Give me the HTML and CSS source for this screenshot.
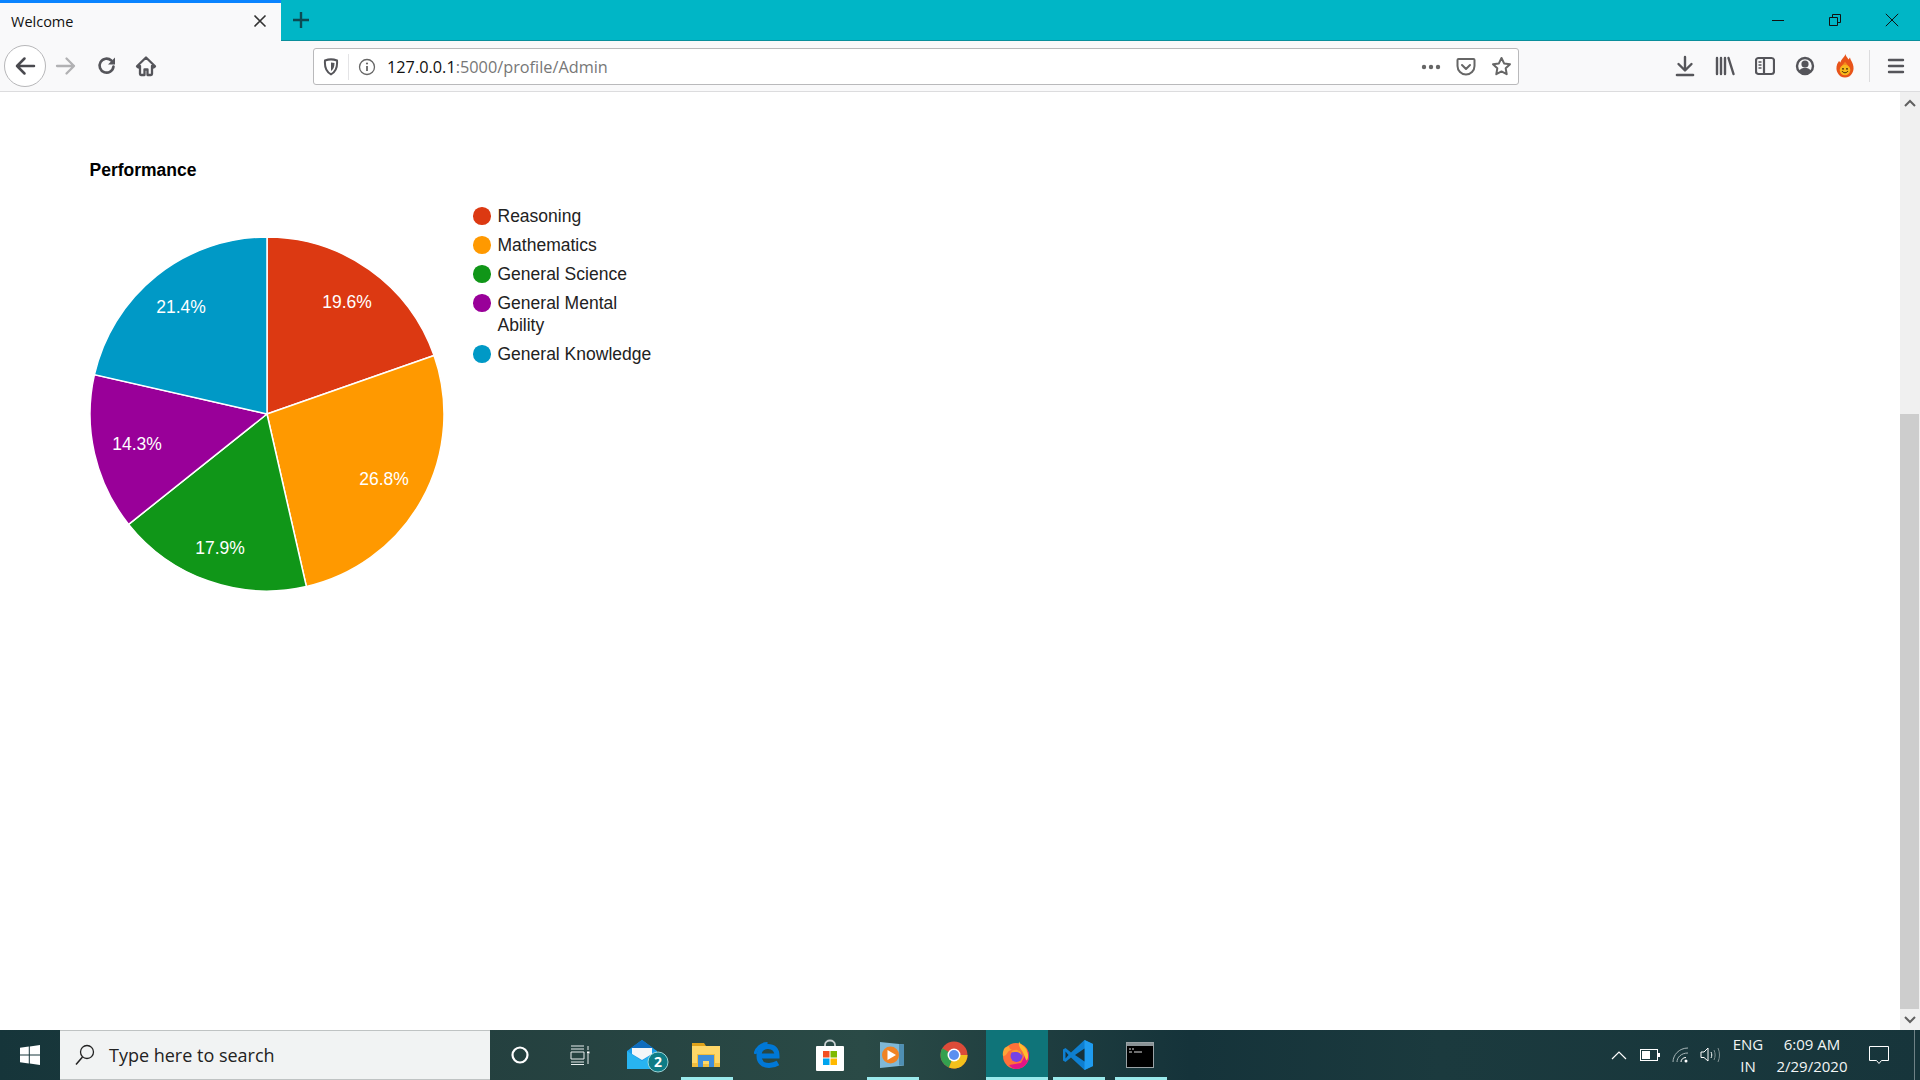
FILE: index.html
```html
<!DOCTYPE html>
<html lang="en">
<head>
<meta charset="utf-8">
<title>Welcome</title>
<link rel="stylesheet" href="styles.css">
</head>
<body>
<div class="window">
  <header class="titlebar">
    <div class="tab">
      <span class="tab-title">Welcome</span>
      <svg class="tab-close" width="14" height="14" viewBox="0 0 14 14"><path d="M1.5 1.5l11 11M12.5 1.5l-11 11" stroke="#333" stroke-width="1.6" fill="none"/></svg>
    </div>
    <div class="new-tab">
      <svg width="18" height="18" viewBox="0 0 18 18"><path d="M9 1v16M1 9h16" stroke="#0b4a52" stroke-width="2.4" fill="none"/></svg>
    </div>
    <div class="caption">
      <div class="caption-btn"><svg width="14" height="14" viewBox="0 0 14 14"><path d="M1 7.5h12" stroke="#111" stroke-width="1" fill="none"/></svg></div>
      <div class="caption-btn"><svg width="14" height="14" viewBox="0 0 14 14"><path d="M1.5 4.5h8v8h-8zM4.5 4.5v-3h8v8h-3" stroke="#111" stroke-width="1" fill="none"/></svg></div>
      <div class="caption-btn"><svg width="14" height="14" viewBox="0 0 14 14"><path d="M.8.8l12.4 12.4M13.2.8L.8 13.2" stroke="#111" stroke-width="1" fill="none"/></svg></div>
    </div>
  </header>

  <nav class="toolbar">
    <div class="back-btn">
      <svg width="22" height="22" viewBox="0 0 22 22"><path d="M20 11H3M10.500 3.500L3 11l7.500 7.500" stroke="#4a4a4f" stroke-width="2.500" fill="none" stroke-linecap="round" stroke-linejoin="round"/></svg>
    </div>
    <div class="tool"><svg width="22" height="22" viewBox="0 0 22 22"><path d="M2 11h17M11.500 3.500L19 11l-7.500 7.500" stroke="#b1b1b3" stroke-width="2.300" fill="none" stroke-linecap="round" stroke-linejoin="round"/></svg></div>
    <div class="tool tool-reload"><svg width="20" height="20" viewBox="0 0 20 20"><path d="M16.500 10.500a7 7 0 1 1-2.200-6" stroke="#55555a" stroke-width="2.600" fill="none" stroke-linecap="round"/><path d="M18 1.500v7h-7z" fill="#55555a"/></svg></div>
    <div class="tool"><svg width="22" height="22" viewBox="0 0 22 22"><path d="M11 2.500L2 11.300l1.300 1.200L5 11v8c0 .6.400 1 1 1h3.500v-5.500h3V20H16c.6 0 1-.4 1-1v-8l1.700 1.500 1.300-1.200z" fill="none" stroke="#55555a" stroke-width="2.300" stroke-linejoin="round"/></svg></div>

    <div class="urlbar">
      <div class="url-shield">
        <svg width="16" height="18" viewBox="0 0 16 18"><path d="M2 2.500c4-1.500 8-1.500 12 0 .5 6-1 11.500-6 13.800C3 14 1.500 8.500 2 2.500z" fill="none" stroke="#55555a" stroke-width="2"/><path d="M8 4.500c1.300 0 2.500.2 3.500.6 0 3.500-1 6.500-3.500 8z" fill="#55555a"/></svg>
      </div>
      <div class="url-info">
        <svg width="18" height="18" viewBox="0 0 18 18"><circle cx="9" cy="9" r="7.500" fill="none" stroke="#666" stroke-width="1.300"/><path d="M9 8v5" stroke="#666" stroke-width="1.800"/><circle cx="9" cy="5.500" r="1.100" fill="#666"/></svg>
      </div>
      <span class="url-text"><span class="url-host">127.0.0.1</span>:5000/profile/Admin</span>
      <div class="url-actions">
        <svg width="20" height="6" viewBox="0 0 20 6"><circle cx="3" cy="3" r="2.200" fill="#666"/><circle cx="10" cy="3" r="2.200" fill="#666"/><circle cx="17" cy="3" r="2.200" fill="#666"/></svg>
        <svg width="20" height="20" viewBox="0 0 20 20"><path d="M2.500 2h15c.6 0 1 .4 1 1v6c0 4.700-3.800 8.500-8.500 8.500S1.500 13.700 1.500 9V3c0-.6.400-1 1-1z" fill="none" stroke="#666" stroke-width="2"/><path d="M6 8l4 4 4-4" fill="none" stroke="#666" stroke-width="2" stroke-linecap="round" stroke-linejoin="round"/></svg>
        <svg width="21" height="21" viewBox="0 0 21 21"><path d="M10.500 2l2.600 5.400 5.900.8-4.300 4.100 1 5.900-5.200-2.800-5.200 2.800 1-5.900L2 8.200l5.900-.8z" fill="none" stroke="#666" stroke-width="2" stroke-linejoin="round"/></svg>
      </div>
    </div>

    <div class="tool-group">
      <div class="tool"><svg width="20" height="22" viewBox="0 0 20 22"><path d="M10 2v13M3.500 9l6.500 6.500L16.500 9" fill="none" stroke="#55555a" stroke-width="2.400" stroke-linecap="round" stroke-linejoin="round"/><path d="M2 20h16" stroke="#55555a" stroke-width="2.600" stroke-linecap="round"/></svg></div>
      <div class="tool"><svg width="20" height="20" viewBox="0 0 20 20"><path d="M2 2v16M6 2v16M10 2v16M13.500 2l5 16" stroke="#55555a" stroke-width="2.400" fill="none" stroke-linecap="round"/></svg></div>
      <div class="tool"><svg width="20" height="20" viewBox="0 0 20 20"><rect x="1" y="2" width="18" height="16" rx="2.500" fill="none" stroke="#55555a" stroke-width="2.200"/><path d="M9 2v16" stroke="#55555a" stroke-width="2.200"/><path d="M3.500 6h3M3.500 9h3M3.500 12h3" stroke="#55555a" stroke-width="1.300"/></svg></div>
      <div class="tool"><svg width="20" height="20" viewBox="0 0 20 20"><circle cx="10" cy="10" r="8" fill="none" stroke="#55555a" stroke-width="2.400"/><circle cx="10" cy="8" r="3.600" fill="#55555a"/><path d="M4 15c1.500-2.500 3.500-3.200 6-3.200s4.500.7 6 3.200l-2 2H6z" fill="#55555a"/></svg></div>
      <div class="tool"><svg width="18" height="24" viewBox="0 0 18 24"><path d="M9.500 0c.3 2.500 2.200 3.500 3 5.500L14 3.500c.3 2 1.800 3.500 2.800 6.500 1.200 3.500 1 6.500-.5 9-1.500 3-4.300 4.500-7.300 4.500s-5.800-1.500-7.300-4.500c-1.500-2.500-1.700-5.500-.5-9L3 7l1.500 1.500C5 5 8.500 3.500 9.500 0z" fill="#e8541a"/><path d="M9 7.500c.5 1.500 2.500 2.500 3 4.500H6c.5-2 2.500-2.500 3-4.500z" fill="#f58a1f"/><circle cx="9" cy="16" r="5.300" fill="#f8b81e"/><circle cx="7" cy="14.800" r=".9" fill="#3a2606"/><circle cx="11" cy="14.800" r=".9" fill="#3a2606"/><path d="M6 17c1.400 2.300 4.600 2.300 6 0" fill="none" stroke="#3a2606" stroke-width="1"/></svg></div>
      <div class="tool-sep"></div>
      <div class="tool tool-menu"><svg width="18" height="16" viewBox="0 0 18 16"><path d="M2 2h14M2 8h14M2 14h14" stroke="#55555a" stroke-width="2.400" stroke-linecap="round"/></svg></div>
    </div>
  </nav>

  <div class="viewport">
    <main class="page">
      <h2 class="chart-title">Performance</h2>
      <div class="chart">
        <svg class="pie" width="356" height="356" viewBox="-178 -178 356 356">
          <g stroke="#fff" stroke-width="1.500">
            <path d="M0 0V-177A177 177 0 0 1 167.070 -58.460Z" fill="#dc3912"/>
            <path d="M0 0L167.070 -58.460A177 177 0 0 1 39.380 172.560Z" fill="#ff9900"/>
            <path d="M0 0L39.380 172.560A177 177 0 0 1 -138.380 110.360Z" fill="#109618"/>
            <path d="M0 0L-138.380 110.360A177 177 0 0 1 -172.560 -39.380Z" fill="#990099"/>
            <path d="M0 0L-172.560 -39.380A177 177 0 0 1 0 -177Z" fill="#0099c6"/>
          </g>
          <g class="pie-labels">
            <text x="80" y="-106">19.6%</text>
            <text x="117" y="71">26.8%</text>
            <text x="-47" y="140">17.9%</text>
            <text x="-130" y="36">14.3%</text>
            <text x="-86" y="-101">21.4%</text>
          </g>
        </svg>
        <ul class="legend">
          <li class="legend-item"><span class="dot dot-red"></span><span>Reasoning</span></li>
          <li class="legend-item"><span class="dot dot-orange"></span><span>Mathematics</span></li>
          <li class="legend-item"><span class="dot dot-green"></span><span>General Science</span></li>
          <li class="legend-item"><span class="dot dot-purple"></span><span>General Mental<br>Ability</span></li>
          <li class="legend-item"><span class="dot dot-blue"></span><span>General Knowledge</span></li>
        </ul>
      </div>
    </main>
    <aside class="scrollbar">
      <div class="scroll-btn"><svg width="12" height="8" viewBox="0 0 12 8"><path d="M1 7l5-5 5 5" fill="none" stroke="#606060" stroke-width="2"/></svg></div>
      <div class="scroll-track"><div class="scroll-thumb"></div></div>
      <div class="scroll-btn"><svg width="12" height="8" viewBox="0 0 12 8"><path d="M1 1l5 5 5-5" fill="none" stroke="#606060" stroke-width="2"/></svg></div>
    </aside>
  </div>

  <footer class="taskbar">
    <div class="start">
      <svg width="20" height="20" viewBox="0 0 20 20"><path d="M0 2.800l8.800-1.200v8H0zM9.800 1.400L20 0v9.600H9.800zM0 10.600h8.800v8L0 17.300zM9.800 10.600H20V20l-10.200-1.400z" fill="#fff"/></svg>
    </div>
    <div class="search">
      <svg width="20" height="22" viewBox="0 0 20 22"><circle cx="12" cy="8" r="6.500" fill="none" stroke="#222" stroke-width="1.300"/><path d="M7.500 13L1 20.500" stroke="#222" stroke-width="1.500"/></svg>
      <span class="search-text">Type here to search</span>
    </div>
    <div class="task-cell"><svg width="20" height="20" viewBox="0 0 20 20"><circle cx="10" cy="10" r="7.500" fill="none" stroke="#fff" stroke-width="2.200"/></svg></div>
    <div class="task-cell task-view"><svg width="20" height="20" viewBox="0 0 20 20"><path d="M1 1h13M1 4h13M1 7h13v7H1zM1 17h13M1 19.500h13M18 1v4M18 9v10" stroke="#e8eeee" stroke-width="1" fill="none"/><rect x="17" y="6.500" width="2.500" height="2" fill="#fff"/></svg></div>
    <div class="task-cell task-mail">
      <svg width="44" height="36" viewBox="0 0 44 36"><path d="M2 14L17 3l15 11v18H2z" fill="#1a9be8"/><path d="M17 3L6 11h22z" fill="#0f6cbd"/><path d="M7 11h20v6l-10 6-10-6z" fill="#f4f6f8"/><path d="M2 14l15 10 15-10v18H2z" fill="#28b4f0"/><circle cx="33" cy="25" r="10" fill="#0e7c86" stroke="#9cd5d8" stroke-width="1"/><text class="mail-count" x="33" y="30">2</text></svg>
    </div>
    <div class="task-cell is-open">
      <svg width="30" height="28" viewBox="0 0 30 28"><path d="M1 2h12l2 3H1z" fill="#dfa21a"/><path d="M1 5h28v21H1z" fill="#ffd768"/><path d="M1 22h5v-9h18v9h5v4H1z" fill="#f2bd3d"/><path d="M7 26V14h16v12h-5v-6h-6v6z" fill="#3f8edb"/><path d="M12 20h6v3h-6z" fill="#ffd768"/></svg>
    </div>
    <div class="task-cell">
      <svg width="28" height="28" viewBox="0 0 28 28"><path d="M5 15H23C23 8 19 5.500 14 5.500C8.500 5.500 5 9 5 15C5 21 9 24.500 15 24.500C18.500 24.500 21.500 23.500 24 22" fill="none" stroke="#0078d7" stroke-width="5"/><path d="M1 13C2.500 7 7 2.500 13.500 2.500" fill="none" stroke="#0078d7" stroke-width="3"/></svg>
    </div>
    <div class="task-cell">
      <svg width="28" height="32" viewBox="0 0 28 32"><path d="M9 8V6c0-6 10-6 10 0v2" fill="none" stroke="#c9d0d2" stroke-width="1.800"/><rect x="0" y="7" width="28" height="25" rx="1" fill="#fff"/><rect x="7" y="12" width="6.500" height="6.500" fill="#f25022"/><rect x="14.500" y="12" width="6.500" height="6.500" fill="#7fba00"/><rect x="7" y="19.500" width="6.500" height="6.500" fill="#00a4ef"/><rect x="14.500" y="19.500" width="6.500" height="6.500" fill="#ffb900"/></svg>
    </div>
    <div class="task-cell is-open">
      <svg width="26" height="28" viewBox="0 0 26 28"><path d="M1 1l24 2.500v21L1 27z" fill="#7fb8d6"/><path d="M20 3v21.500l5-.5V3.500z" fill="#4f8fb3"/><circle cx="11.500" cy="14" r="8.500" fill="#f08324"/><path d="M8.500 9l8.500 5-8.500 5z" fill="#fff"/></svg>
    </div>
    <div class="task-cell">
      <svg width="28" height="28" viewBox="0 0 28 28"><circle cx="14" cy="14" r="13.500" fill="#dd4b39"/><path d="M14 14L2.300 7.200A13.500 13.500 0 0 0 9 26.500z" fill="#34a04f"/><path d="M14 14h13.500A13.500 13.500 0 0 1 9 26.500z" fill="#f3c11c"/><circle cx="14" cy="14" r="6.500" fill="#fff"/><circle cx="14" cy="14" r="5" fill="#5a8ff0"/></svg>
    </div>
    <div class="task-cell is-active">
      <svg width="28" height="28" viewBox="0 0 28 28"><circle cx="14" cy="15" r="13" fill="#ff7139"/><path d="M14 28a13 13 0 0 0 13-13c0-2-.5-4-1.300-5.700L19 22l-12 2c2 2.500 4.500 4 7 4z" fill="#e31587"/><path d="M17 .5c1 3 5 4 7 7.500 2.500 4 3 8 1 11.500-1 .5-2-4-4-8-1.500-3-5-6-4-11z" fill="#ffbd2e"/><path d="M2 8c-1 2-1.500 5-1 7 2 0 3-1 5-4 1-1.500 3-2 4-2-2-1-3-2-3-4-2 .5-4 1-5 3z" fill="#ffa436"/><circle cx="14.500" cy="15" r="6" fill="#7542e5"/><path d="M9 11c2-2 5-3 8-1.500 2 1 3 3 2.500 5-1-2-3-3.500-5-3.500s-3 .5-5.500 0z" fill="#ff9a2b"/></svg>
    </div>
    <div class="task-cell is-open">
      <svg width="32" height="32" viewBox="0 0 32 32"><path d="M22.500 1L31 5v22l-8.500 4L9 18.500 3.500 23 1 21.500v-11L3.500 9 9 13.500z" fill="#0e7fd0"/><path d="M22.500 1L31 5v22l-8.500 4z" fill="#1f9cf0"/><path d="M22.500 9.500L13 16l9.500 6.500z" fill="#17323a"/><path d="M3.500 12.500L6.500 16l-3 3.500z" fill="#17323a"/></svg>
    </div>
    <div class="task-cell is-open">
      <svg width="28" height="26" viewBox="0 0 28 26"><rect x=".5" y=".5" width="27" height="25" fill="#000" stroke="#9aa3a6"/><rect x="1" y="1" width="26" height="3" fill="#8a9396"/><path d="M3 7h2M6 7h2M3 10h3M8 10h8" stroke="#ddd" stroke-width="1"/></svg>
    </div>
    <div class="tray">
      <svg class="tray-chevron" width="16" height="10" viewBox="0 0 16 10"><path d="M1 9l7-7 7 7" fill="none" stroke="#fff" stroke-width="1.200"/></svg>
      <svg class="tray-battery" width="20" height="12" viewBox="0 0 20 12"><rect x=".5" y=".5" width="17" height="11" fill="none" stroke="#fff"/><rect x="2" y="2" width="8" height="8" fill="#fff"/><rect x="18" y="4" width="2" height="4" fill="#fff"/></svg>
      <svg class="tray-wifi" width="18" height="16" viewBox="0 0 18 16"><path d="M1 15C1 8 7 1 16 1M5 15c0-4.500 4-9 11-9" fill="none" stroke="#a9b7b9" stroke-width="1"/><path d="M9 15c0-2.500 2-4.500 5-4.500" fill="none" stroke="#fff" stroke-width="1"/><circle cx="14" cy="14" r="1.500" fill="#fff"/></svg>
      <svg class="tray-volume" width="22" height="18" viewBox="0 0 22 18"><path d="M1 6h3l4-4v13l-4-3.500H1z" fill="none" stroke="#fff" stroke-width="1"/><path d="M11 6c1 2 1 4 0 6" fill="none" stroke="#fff"/><path d="M14 4c1.500 3.500 1.500 6.500 0 10M18 2c2 4.500 2 9.500 0 14" fill="none" stroke="#7f8f91"/></svg>
      <div class="tray-lang"><span>ENG</span><span>IN</span></div>
      <div class="tray-clock"><span>6:09 AM</span><span>2/29/2020</span></div>
      <svg class="tray-notify" width="20" height="20" viewBox="0 0 20 20"><path d="M.5 1.500h19v14h-7l-2.500 3-2.500-3h-7z" fill="none" stroke="#fff" stroke-width="1"/></svg>
      <div class="tray-edge"></div>
    </div>
  </footer>
</div>
</body>
</html>
```

FILE: styles.css
```css
* { box-sizing: border-box; }
html, body { margin: 0; padding: 0; height: 100%; overflow: hidden; background: #fff; }
.window { display: flex; flex-direction: column; width: 1920px; height: 1080px; font-family: "Liberation Sans", Arial, sans-serif; }

/* Title bar */
.titlebar { display: flex; align-items: stretch; height: 41px; flex: none; background: #00b6c6; border-bottom: 1px solid #0a8f9b; }
.tab { display: flex; align-items: center; justify-content: space-between; width: 281px; height: 41px; padding: 0 14px 2px 11px; background: #f9f9fa; border-top: 3px solid #0a84ff; }
.tab-title { font: 14.500px "Open Sans", "Noto Sans", sans-serif; color: #111; }
.new-tab { display: flex; align-items: center; padding-left: 11px; }
.caption { display: flex; margin-left: auto; }
.caption-btn { display: flex; align-items: center; justify-content: center; width: 57px; }

/* Toolbar */
.toolbar { display: flex; align-items: center; height: 51px; flex: none; background: #f9f9fa; border-bottom: 1px solid #dcdcde; padding-left: 4px; }
.back-btn { display: flex; align-items: center; justify-content: center; width: 42px; height: 42px; border: 1px solid #b7b7b9; border-radius: 50%; background: #fff; padding-right: 1px; }
.tool { display: flex; align-items: center; justify-content: center; width: 40px; height: 40px; flex: none; }
.tool-reload { padding-left: 1px; }
.tool-menu { padding-left: 2px; }
.urlbar { display: flex; align-items: center; width: 1206px; height: 37px; margin: 1px 0 0 147px; background: #fff; border: 1px solid #b9b9bb; border-radius: 3px; flex: none; }
.url-shield { display: flex; align-items: center; justify-content: center; width: 35px; height: 26px; flex: none; border-right: 1px solid #e4e4e6; }
.url-info { display: flex; justify-content: center; width: 35px; flex: none; }
.url-text { font: 16.300px "Open Sans", "Noto Sans", sans-serif; color: #777; margin-left: 3px; }
.url-host { color: #111; }
.url-actions { display: flex; align-items: center; gap: 15px; margin-left: auto; padding-right: 6px; }
.tool-group { display: flex; align-items: center; margin-left: 146px; }
.tool-sep { width: 1px; height: 32px; background: #dcdcde; margin: 0 5px 0 4px; }

/* Page */
.viewport { display: flex; flex: 1; min-height: 0; background: #fff; }
.page { flex: 1; padding: 68px 0 0 89.500px; }
.chart-title { margin: 0 0 56px; font-size: 17.500px; line-height: 20px; font-weight: 700; color: #000; }
.chart { display: flex; align-items: flex-start; }
.pie { display: block; flex: none; margin-left: -.5px; }
.pie-labels text { font-size: 17.500px; fill: #fff; text-anchor: middle; }
.legend { list-style: none; margin: -31px 0 0 28px; padding: 0; width: 190px; display: flex; flex-direction: column; gap: 7px; font-size: 17.500px; line-height: 22px; color: #222; }
.legend-item { display: flex; gap: 7px; }
.dot { width: 17.500px; height: 17.500px; border-radius: 50%; flex: none; margin-top: 2px; }
.dot-red { background: #dc3912; }
.dot-orange { background: #ff9900; }
.dot-green { background: #109618; }
.dot-purple { background: #990099; }
.dot-blue { background: #0099c6; }

/* Scrollbar */
.scrollbar { display: flex; flex-direction: column; width: 20px; flex: none; background: #f0f0f0; }
.scroll-btn { display: flex; align-items: center; justify-content: center; height: 21px; flex: none; }
.scroll-track { flex: 1; padding-top: 301px; display: flex; }
.scroll-thumb { flex: 1; margin-right: 1px; background: #cdcdcd; }

/* Taskbar */
.taskbar { display: flex; align-items: stretch; height: 50px; flex: none; background: linear-gradient(90deg, #16353a 0%, #24403f 25%, #2a4a46 45%, #15333a 62%, #1b3a3e 75%, #17353b 100%); }
.start { display: flex; align-items: center; justify-content: center; width: 60px; flex: none; }
.search { display: flex; align-items: center; gap: 14px; width: 430px; flex: none; padding-left: 15px; background: #f1f3f3; border-top: 1px solid #bfc3c3; border-bottom: 1px solid #bfc3c3; }
.search-text { font: 18px "Open Sans", "Noto Sans", sans-serif; color: #222; }
.task-cell { display: flex; align-items: center; justify-content: center; width: 62px; flex: none; position: relative; padding-right: 2px; }
.task-view { padding-right: 6px; }
.task-mail { padding: 0 0 0 3px; }
.is-open::after { content: ""; position: absolute; left: 5px; right: 5px; bottom: 0; height: 3px; background: #9aeaec; }
.is-active { background: #0f7479; }
.is-active::after { content: ""; position: absolute; left: 0; right: 0; bottom: 0; height: 3px; background: #9aeaec; }
.mail-count { font: 700 14px "Open Sans", sans-serif; fill: #fff; text-anchor: middle; }
.tray { display: flex; align-items: center; margin-left: auto; color: #f2f5f5; font: 15px/22px "Open Sans", "Noto Sans", sans-serif; }
.tray-chevron { margin-right: 13px; }
.tray-battery { margin-right: 12px; }
.tray-wifi { margin-right: 10px; }
.tray-volume { margin-right: 8px; }
.tray-lang { display: flex; flex-direction: column; align-items: center; width: 36px; margin-right: 3px; }
.tray-clock { display: flex; flex-direction: column; align-items: center; width: 86px; }
.tray-notify { margin: 0 25px 0 14px; }
.tray-edge { width: 1px; height: 50px; background: #6f8286; margin-right: 5px; }
```
